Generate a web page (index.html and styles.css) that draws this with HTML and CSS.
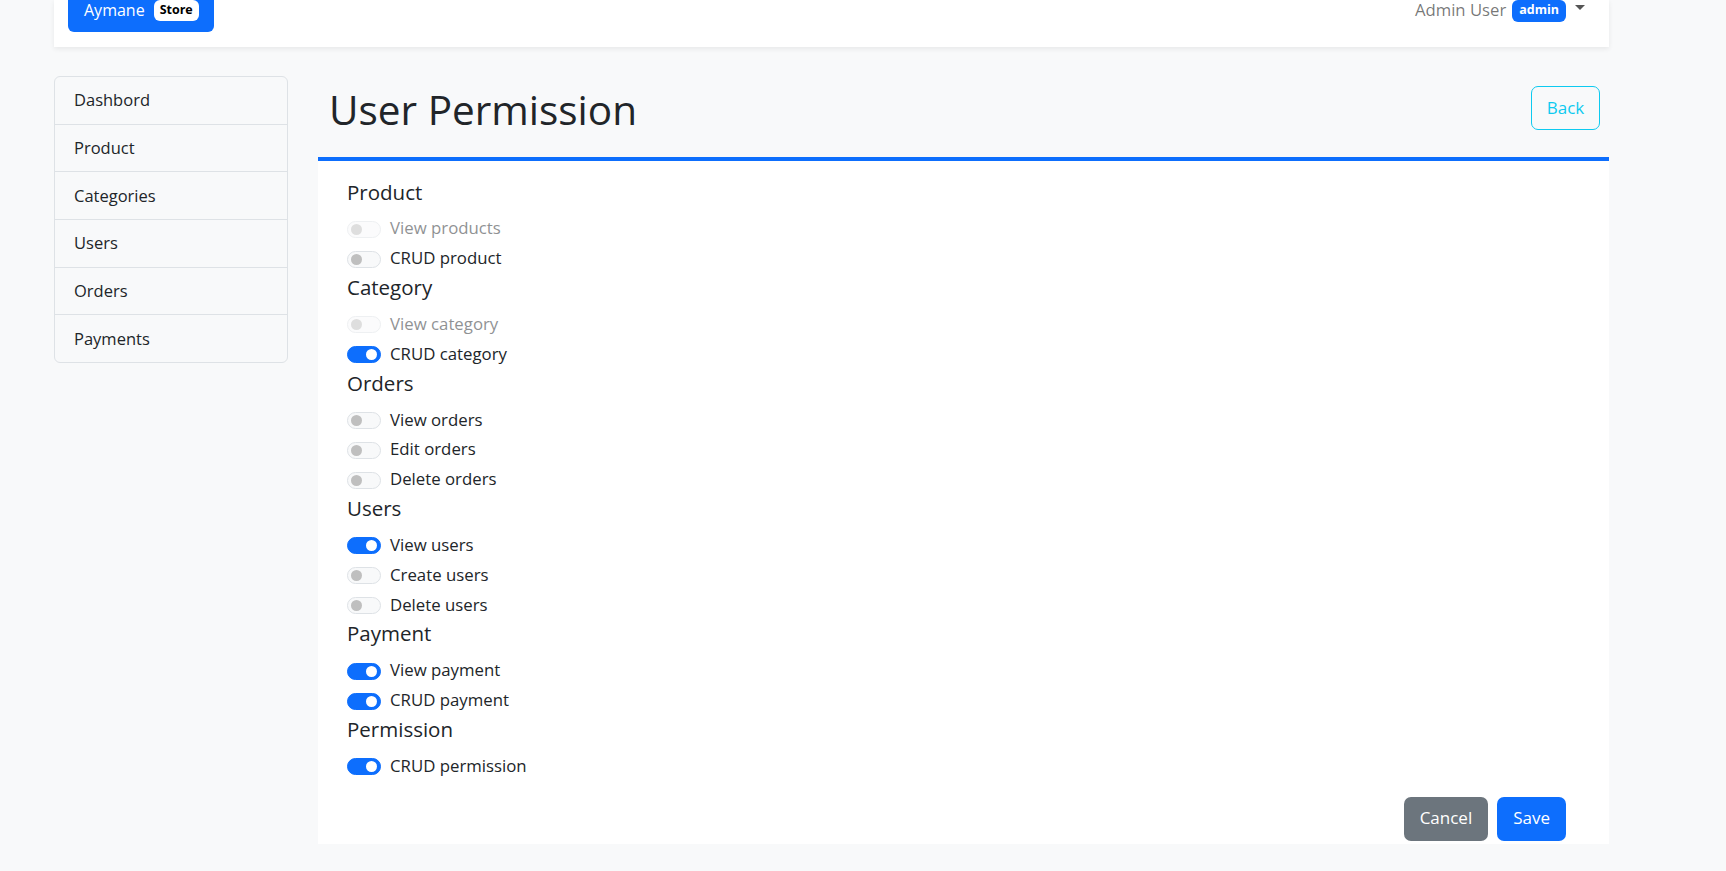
FILE: index.html
```html
<!DOCTYPE html>
<html lang="en">
<head>
<meta charset="utf-8">
<title>User Permission</title>
<link rel="stylesheet" href="styles.css">
</head>
<body>
<div class="page">
  <header class="navbar">
    <a class="brand" href="#">Aymane <span class="badge badge-light">Store</span></a>
    <div class="user">Admin User <span class="badge badge-primary">admin</span><span class="caret"></span></div>
  </header>
  <div class="layout">
    <nav class="sidebar">
      <a class="side-item" href="#">Dashbord</a>
      <a class="side-item" href="#">Product</a>
      <a class="side-item" href="#">Categories</a>
      <a class="side-item" href="#">Users</a>
      <a class="side-item" href="#">Orders</a>
      <a class="side-item" href="#">Payments</a>
    </nav>
    <main class="main">
      <div class="main-head">
        <h1 class="title">User Permission</h1>
        <button class="btn-back" type="button">Back</button>
      </div>
      <form class="card">
        <h5 class="group-title">Product</h5>
        <label class="row disabled"><span class="switch"></span>View products</label>
        <label class="row"><span class="switch"></span>CRUD product</label>
        <h5 class="group-title">Category</h5>
        <label class="row disabled"><span class="switch"></span>View category</label>
        <label class="row"><span class="switch on"></span>CRUD category</label>
        <h5 class="group-title">Orders</h5>
        <label class="row"><span class="switch"></span>View orders</label>
        <label class="row"><span class="switch"></span>Edit orders</label>
        <label class="row"><span class="switch"></span>Delete orders</label>
        <h5 class="group-title">Users</h5>
        <label class="row"><span class="switch on"></span>View users</label>
        <label class="row"><span class="switch"></span>Create users</label>
        <label class="row"><span class="switch"></span>Delete users</label>
        <h5 class="group-title">Payment</h5>
        <label class="row"><span class="switch on"></span>View payment</label>
        <label class="row"><span class="switch on"></span>CRUD payment</label>
        <h5 class="group-title">Permission</h5>
        <label class="row"><span class="switch on"></span>CRUD permission</label>
        <div class="actions">
          <button class="btn btn-secondary" type="button">Cancel</button>
          <button class="btn btn-primary" type="button">Save</button>
        </div>
      </form>
    </main>
  </div>
</div>
</body>
</html>
```

FILE: styles.css
```css
* { box-sizing: border-box; }

html, body {
  margin: 0;
  padding: 0;
  background: #f8f9fa;
  color: #212529;
  font-family: "Open Sans", "Noto Sans", sans-serif;
  font-size: 16.5px;
}

.page {
  width: 1555px;
  margin-left: 54px;
}

/* navbar */
.navbar {
  height: 47px;
  background: #fff;
  box-shadow: 0 2px 5px rgba(0, 0, 0, 0.07);
  display: flex;
  justify-content: space-between;
  align-items: flex-start;
  padding: 0 24px 0 14px;
}

.brand {
  margin-top: -13px;
  height: 45px;
  display: flex;
  align-items: center;
  gap: 9px;
  padding: 0 15px 0 16px;
  background: #0d6efd;
  color: #fff;
  border-radius: 6px;
  text-decoration: none;
  font-size: 16px;
  line-height: 24px;
}

.user {
  margin-top: -13px;
  height: 45px;
  display: flex;
  align-items: center;
  color: rgba(0, 0, 0, 0.55);
  font-size: 16.7px;
  line-height: 24px;
}

.badge {
  display: inline-flex;
  align-items: center;
  justify-content: center;
  font-weight: 700;
  font-size: 12.5px;
  border-radius: 6px;
  line-height: 1;
}

.badge-light {
  background: #fff;
  color: #000;
  height: 21px;
  padding: 0 6px;
  margin-top: 1px;
}

.badge-primary {
  background: #0d6efd;
  color: #fff;
  height: 22px;
  padding: 0 7px;
  margin-left: 6px;
  margin-top: 2px;
}

.caret {
  width: 0;
  height: 0;
  margin-left: 9px;
  border-top: 5px solid #555;
  border-left: 5px solid transparent;
  border-right: 5px solid transparent;
  margin-top: -4px;
}

/* layout */
.layout {
  margin-top: 29px;
  display: flex;
  align-items: flex-start;
  gap: 30px;
}

.sidebar {
  width: 234px;
  flex: none;
  display: flex;
  flex-direction: column;
  border: 1px solid #dee2e6;
  border-radius: 6px;
  background: #f8f9fa;
  overflow: hidden;
}

.side-item {
  height: 46.7px;
  display: flex;
  align-items: center;
  padding: 0 19px;
  color: #212529;
  text-decoration: none;
  line-height: 24px;
}

.side-item + .side-item {
  border-top: 1px solid #dee2e6;
  height: 47.7px;
}

.main {
  flex: 1;
  min-width: 0;
}

.main-head {
  height: 81px;
  display: flex;
  justify-content: space-between;
  align-items: flex-start;
  padding: 0 9px 0 11px;
}

.title {
  margin: 10px 0 0;
  font-size: 40.5px;
  font-weight: 400;
  line-height: 1.2;
  color: #212529;
}

.btn-back {
  margin-top: 10px;
  height: 44px;
  width: 69px;
  border: 1px solid #0dcaf0;
  border-radius: 7px;
  background: transparent;
  color: #0dcaf0;
  font-family: inherit;
  font-size: 17px;
  padding: 0 0 2px;
}

/* card */
.card {
  margin: 0;
  background: #fff;
  border-top: 4px solid #0d6efd;
  padding: 16.5px 43px 3px 29px;
  display: flex;
  flex-direction: column;
}

.group-title {
  margin: 0 0 8px;
  font-size: 20.5px;
  font-weight: 400;
  line-height: 28px;
  color: #212529;
}

.row {
  height: 29.8px;
  display: flex;
  align-items: center;
  gap: 9px;
  font-size: 16.8px;
  line-height: 24px;
  color: #212529;
}

.row.disabled {
  opacity: 0.5;
}

.switch {
  position: relative;
  width: 34px;
  height: 17px;
  flex: none;
  border: 1px solid #dee2e6;
  border-radius: 9px;
  background: #f8f9fa;
  margin-top: 2px;
}

.switch::after {
  content: "";
  position: absolute;
  top: 2px;
  left: 3px;
  width: 11px;
  height: 11px;
  border-radius: 50%;
  background: #bfbfbf;
}

.switch.on {
  background: #0d6efd;
  border-color: #0d6efd;
}

.switch.on::after {
  left: auto;
  right: 3px;
  background: #fff;
}

.actions {
  margin-top: 16px;
  display: flex;
  justify-content: flex-end;
  gap: 9px;
}

.btn {
  height: 44px;
  border: none;
  border-radius: 7px;
  color: #fff;
  font-family: inherit;
  font-size: 17px;
  padding: 0 16px 2px;
}

.btn-secondary {
  background: #6c757d;
}

.btn-primary {
  background: #0d6efd;
}
```
